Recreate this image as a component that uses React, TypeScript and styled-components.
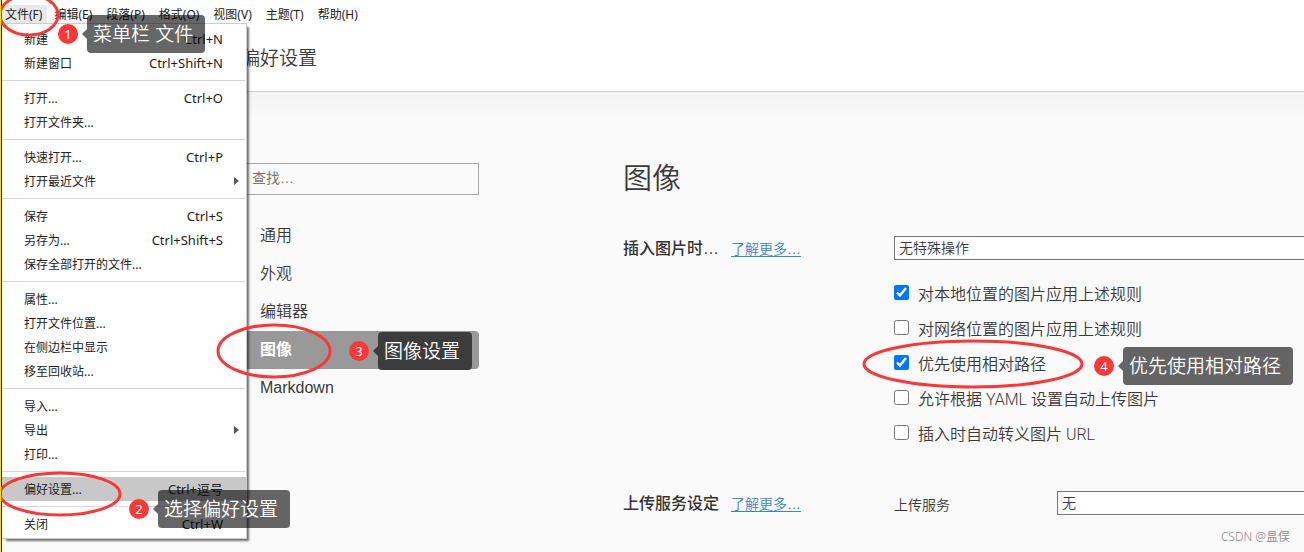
import React from 'react';
import styled, { createGlobalStyle, css } from 'styled-components';

const RED = '#fb3837';
const UI = '"Noto Sans", "Noto Sans CJK SC", sans-serif';
const BODY = '"Liberation Sans", "Noto Sans CJK SC", sans-serif';

const GlobalStyle = createGlobalStyle`
  * { box-sizing: border-box; }
  html { overflow: hidden; }
  body {
    margin: 0;
    background: #fafafa;
    color: #3a3a3a;
    font-family: ${BODY};
    font-size: 16px;
  }
  button, input, select { font: inherit; color: inherit; }
`;

const Frame = styled.div`
  position: relative;
  min-height: 100vh;
  overflow: hidden;
  border-left: 1px solid #ffe600;
`;

const Window = styled.div`
  min-height: 100vh;
  border-left: 1px solid #111;
`;

const MenuBar = styled.nav`
  display: flex;
  height: 29px;
  padding-top: 5px;
  background: #fff;
  font-family: ${UI};
  font-size: 12px;
`;

const MenuBarButton = styled.button<{ $open?: boolean }>`
  height: 19px;
  margin: 0;
  padding: 0 5px 0 3px;
  border: 0;
  color: #222;
  line-height: 18px;
  white-space: nowrap;
  background: ${(p) => (p.$open ? '#e8e8e8' : 'transparent')};
  & + & { padding: 0 7px; }
`;

const Header = styled.header`
  height: 63px;
  padding-left: 239px;
  background: #fff;
  border-bottom: 1px solid #cfcfcf;
`;

const HeaderTitle = styled.h1`
  margin: 0;
  font-size: 19px;
  font-weight: 350;
  line-height: 60px;
`;

const Content = styled.div`
  display: flex;
  padding-left: 238px;
  padding-top: 71px;
  background: linear-gradient(#f3f3f3, #fafafa 26px);
`;

const Sidebar = styled.aside`
  flex: 0 0 239px;
`;

const Search = styled.input`
  display: block;
  width: 100%;
  height: 32px;
  padding: 0 11px 2px;
  border: 1px solid #a8a8a8;
  border-radius: 0;
  background: #fafafa;
  font-size: 14px;
  outline: 0;
  &::placeholder { color: #777; opacity: 1; }
`;

const NavList = styled.ul`
  margin: 22px 0 0;
  padding: 0;
  list-style: none;
`;

const NavLink = styled.a<{ $active?: boolean }>`
  display: block;
  height: 38px;
  padding-left: 20px;
  border-radius: 4px;
  color: #3a3a3a;
  font-weight: 350;
  line-height: 38px;
  text-decoration: none;
  ${(p) => p.$active && css`
    background: #999;
    color: #fff;
    font-weight: 700;
  `}
`;

const Main = styled.main`
  flex: 1;
  min-width: 0;
  padding-left: 144px;
`;

const PageTitle = styled.h2`
  margin: 0 0 41px;
  font-size: 29px;
  font-weight: 350;
  line-height: 32px;
`;

const Setting = styled.section`
  display: grid;
  grid-template-columns: 271px 1fr;
  & + & { margin-top: 41px; }
`;

const SettingHead = styled.div`
  display: flex;
  gap: 12px;
  align-items: baseline;
  line-height: 26px;
  white-space: nowrap;
`;

const SettingName = styled.h3`
  margin: 0;
  color: #333;
  font-size: 16px;
  font-weight: 500;
`;

const LearnMore = styled.a`
  color: #4183c4;
  font-size: 14px;
  font-weight: 350;
  text-decoration: underline;
  text-underline-offset: 2px;
`;

const Select = styled.select`
  appearance: none;
  width: 100%;
  height: 24px;
  padding: 0 4px;
  border: 1px solid #767676;
  border-right: 0;
  border-radius: 0;
  background: #fff;
  font-size: 14px;
  font-weight: 350;
  line-height: 22px;
`;

const CheckList = styled.div`
  display: flex;
  flex-direction: column;
  padding-top: 15px;
`;

const CheckRow = styled.label`
  display: flex;
  gap: 9px;
  align-items: center;
  height: 35px;
  font-family: Roboto, "Noto Sans CJK SC", sans-serif;
  font-weight: 350;
  white-space: nowrap;
  input {
    width: 15px;
    height: 15px;
    margin: 0;
    accent-color: #0075ff;
  }
`;

const ServiceRow = styled.div`
  display: grid;
  grid-template-columns: 163px 1fr;
  font-size: 14px;
  font-weight: 350;
  line-height: 28px;
`;

const Menu = styled.div`
  position: absolute;
  top: 23px;
  left: 1px;
  width: 245px;
  padding: 3px 0 2px;
  border: 1px solid #ccc;
  border-left: 0;
  background: #fff;
  box-shadow: 3px 3px 2px -1px rgba(0, 0, 0, 0.55);
  font-family: ${UI};
  font-size: 12px;
`;

const MenuItem = styled.button<{ $active?: boolean }>`
  display: flex;
  justify-content: space-between;
  align-items: center;
  width: 100%;
  height: 24px;
  padding: 0 23px 0 22px;
  border: 0;
  color: #222;
  background: ${(p) => (p.$active ? '#c8c8c8' : 'transparent')};
`;

const Shortcut = styled.span`
  font-size: 13px;
  line-height: 18px;
`;

const MenuArrow = styled.svg`
  width: 5px;
  height: 8px;
  margin-right: -16px;
  fill: #555;
`;

const Separator = styled.hr`
  height: 1px;
  margin: 5px 1px 5px 0;
  border: 0;
  background: #d7d7d7;
`;

const Marks = styled.svg`
  position: absolute;
  top: 0;
  left: -1px;
  width: 1304px;
  height: 552px;
  pointer-events: none;
  fill: none;
  stroke: ${RED};
  stroke-width: 3;
`;

const Callout = styled.div<{ $x: number; $y: number }>`
  position: absolute;
  left: ${(p) => p.$x}px;
  top: ${(p) => p.$y}px;
  display: flex;
  align-items: center;
`;

const Badge = styled.span`
  width: 20px;
  height: 20px;
  border-radius: 50%;
  background: ${RED};
  color: #fff;
  font-family: ${UI};
  font-size: 13px;
  line-height: 20px;
  text-align: center;
`;

const Tip = styled.span<{ $solid?: boolean }>`
  --tip: ${(p) => (p.$solid ? '#3c3c3c' : 'rgba(0, 0, 0, 0.6)')};
  display: flex;
  align-items: center;
  margin-left: 4px;
  color: #fff;
  font-size: 19px;
  font-weight: 350;
  line-height: 36px;
  white-space: nowrap;
  &::before {
    content: '';
    border: 5px solid transparent;
    border-left: 0;
    border-right-color: var(--tip);
  }
`;

const TipText = styled.span`
  padding: 2px 12px 0 6px;
  border-radius: 4px;
  background: var(--tip);
`;

const Watermark = styled.div`
  position: absolute;
  right: 14px;
  bottom: 6px;
  color: #888;
  font-family: ${UI};
  font-size: 12px;
  font-weight: 350;
  line-height: 18px;
`;

type Entry = { label: string; keys?: string; sub?: boolean; active?: boolean };

const menuGroups: Entry[][] = [
  [{ label: '新建', keys: 'Ctrl+N' }, { label: '新建窗口', keys: 'Ctrl+Shift+N' }],
  [{ label: '打开...', keys: 'Ctrl+O' }, { label: '打开文件夹...' }],
  [{ label: '快速打开...', keys: 'Ctrl+P' }, { label: '打开最近文件', sub: true }],
  [
    { label: '保存', keys: 'Ctrl+S' },
    { label: '另存为...', keys: 'Ctrl+Shift+S' },
    { label: '保存全部打开的文件...' },
  ],
  [
    { label: '属性...' },
    { label: '打开文件位置...' },
    { label: '在侧边栏中显示' },
    { label: '移至回收站...' },
  ],
  [{ label: '导入...' }, { label: '导出', sub: true }, { label: '打印...' }],
  [{ label: '偏好设置...', keys: 'Ctrl+逗号', active: true }],
  [{ label: '关闭', keys: 'Ctrl+W' }],
];

const topMenus = ['文件(F)', '编辑(E)', '段落(P)', '格式(O)', '视图(V)', '主题(T)', '帮助(H)'];
const sections = ['通用', '外观', '编辑器', '图像', 'Markdown'];
const rules = [
  { label: '对本地位置的图片应用上述规则', on: true },
  { label: '对网络位置的图片应用上述规则', on: false },
  { label: '优先使用相对路径', on: true },
  { label: '允许根据 YAML 设置自动上传图片', on: false },
  { label: '插入时自动转义图片 URL', on: false },
];
const steps = [
  { x: 57, y: 15, text: '菜单栏 文件' },
  { x: 128, y: 490, text: '选择偏好设置' },
  { x: 348, y: 332, text: '图像设置', solid: true },
  { x: 1093, y: 347, text: '优先使用相对路径' },
];

export default function App() {
  return (
    <Frame>
      <GlobalStyle />
      <Window>
        <MenuBar>
          {topMenus.map((name, i) => (
            <MenuBarButton key={name} $open={i === 0}>{name}</MenuBarButton>
          ))}
        </MenuBar>
        <Header>
          <HeaderTitle>偏好设置</HeaderTitle>
        </Header>
        <Content>
          <Sidebar>
            <Search type="search" placeholder="查找…" aria-label="查找" />
            <NavList>
              {sections.map((name) => (
                <li key={name}>
                  <NavLink href="#" $active={name === '图像'}>{name}</NavLink>
                </li>
              ))}
            </NavList>
          </Sidebar>
          <Main>
            <PageTitle>图像</PageTitle>
            <Setting>
              <SettingHead>
                <SettingName id="insert">插入图片时…</SettingName>
                <LearnMore href="#">了解更多…</LearnMore>
              </SettingHead>
              <div>
                <Select aria-labelledby="insert">
                  <option>无特殊操作</option>
                </Select>
                <CheckList>
                  {rules.map((rule) => (
                    <CheckRow key={rule.label}>
                      <input type="checkbox" defaultChecked={rule.on} />
                      {rule.label}
                    </CheckRow>
                  ))}
                </CheckList>
              </div>
            </Setting>
            <Setting>
              <SettingHead>
                <SettingName>上传服务设定</SettingName>
                <LearnMore href="#">了解更多…</LearnMore>
              </SettingHead>
              <ServiceRow>
                <label htmlFor="service">上传服务</label>
                <Select id="service">
                  <option>无</option>
                </Select>
              </ServiceRow>
            </Setting>
          </Main>
        </Content>
      </Window>

      <Menu role="menu">
        {menuGroups.map((group, g) => (
          <React.Fragment key={g}>
            {g > 0 && <Separator />}
            {group.map((item) => (
              <MenuItem key={item.label} role="menuitem" $active={item.active}>
                <span>{item.label}</span>
                {item.keys && <Shortcut>{item.keys}</Shortcut>}
                {item.sub && (
                  <MenuArrow viewBox="0 0 5 8"><path d="M0 0L5 4L0 8Z" /></MenuArrow>
                )}
              </MenuItem>
            ))}
          </React.Fragment>
        ))}
      </Menu>

      <Marks viewBox="0 0 1304 552" aria-hidden="true">
        <ellipse cx="29" cy="15" rx="29" ry="20" />
        <ellipse cx="60" cy="494" rx="60" ry="21" />
        <ellipse cx="274" cy="351" rx="56" ry="26" />
        <ellipse cx="973" cy="364" rx="109" ry="23" />
      </Marks>
      {steps.map((step, i) => (
        <Callout key={step.text} $x={step.x} $y={step.y}>
          <Badge>{i + 1}</Badge>
          <Tip $solid={step.solid}>
            <TipText>{step.text}</TipText>
          </Tip>
        </Callout>
      ))}
      <Watermark>CSDN @昷俣</Watermark>
    </Frame>
  );
}
